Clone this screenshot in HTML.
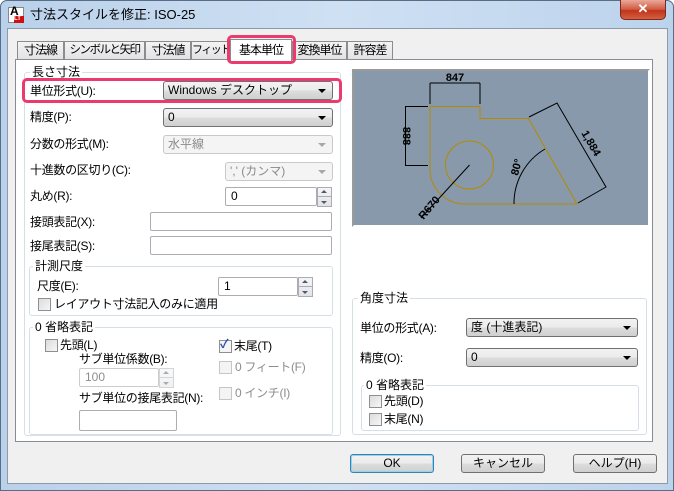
<!DOCTYPE html>
<html><head><meta charset="utf-8"><style>
*{box-sizing:border-box;margin:0;padding:0}
body{width:674px;height:491px;overflow:hidden;background:#fff;font-family:"Liberation Sans","Noto Sans CJK JP",sans-serif;font-size:12px;color:#000;position:relative}
.a{position:absolute}
.frame{left:0;top:0;width:674px;height:491px;border-radius:7px 7px 0 0;background:linear-gradient(90deg,#b9d1ea 0%,#cfe0f3 50%,#bcd3ec 100%);border:1px solid #5a6d84}
.client{left:7px;top:28px;width:661px;height:456px;background:#f0f0f0;border:1px solid #8e9aa8}
.lbl{position:absolute;white-space:nowrap;line-height:14px;letter-spacing:-0.3px}
.tab{position:absolute;top:41px;height:19px;border:1px solid #8c8c8c;border-bottom:none;background:linear-gradient(#f4f4f4,#e2e2e2);text-align:center;line-height:17px;font-size:12px;white-space:nowrap;letter-spacing:-1px;overflow:visible}
.panel{left:15px;top:59px;width:638px;height:383px;background:#fff;border:1px solid #898c95}
.grp{position:absolute;border:1px solid #d5dfe5;border-radius:3px}
.leg{position:absolute;background:#fff;padding:0 2px;line-height:14px;white-space:nowrap}
.cb{position:absolute;height:19px;border:1px solid #707070;border-radius:3px;background:linear-gradient(#f2f2f2,#ebebeb 50%,#dddddd 50%,#cfcfcf);line-height:17px;padding-left:4px}
.cb:after{content:"";position:absolute;right:6px;top:7px;border-left:4px solid transparent;border-right:4px solid transparent;border-top:4px solid #000}
.cbd{position:absolute;height:19px;border:1px solid #c9c9c9;border-radius:3px;background:#f4f4f4;color:#8a8a8a;line-height:17px;padding-left:4px}
.cbd:after{content:"";position:absolute;right:6px;top:7px;border-left:4px solid transparent;border-right:4px solid transparent;border-top:4px solid #a8a8a8}
.tb{position:absolute;height:19px;border:1px solid #abadb3;background:#fff;line-height:17px;padding-left:5px;border-radius:2px}
.spin{position:absolute;width:15px;border:1px solid #aab;background:linear-gradient(#f6f6f6,#e4e4e4)}
.spin:before{content:"";position:absolute;left:3px;top:2px;border-left:3.5px solid transparent;border-right:3.5px solid transparent;border-bottom:3.5px solid #4a5a78}
.spin:after{content:"";position:absolute;left:3px;bottom:2px;border-left:3.5px solid transparent;border-right:3.5px solid transparent;border-top:3.5px solid #4a5a78}
.spin i{position:absolute;left:0;right:0;top:8px;border-top:1px solid #aab}
.chk{position:absolute;width:13px;height:13px;border:1px solid #8f8f8f;background:linear-gradient(135deg,#dcdcdc,#f6f6f6)}
.btn{position:absolute;top:454px;height:19px;width:84px;border:1px solid #707070;border-radius:3px;background:linear-gradient(#f2f2f2,#ebebeb 50%,#dddddd 50%,#cfcfcf);text-align:center;line-height:17px}
.dis{color:#8d8d8d}
</style></head><body>
<div class="a frame"></div>
<div class="a" style="left:8px;top:7px;width:16px;height:16px;background:#fff;border:1px solid #888"></div>
<div class="a" style="left:10px;top:5px;font-size:12px;font-weight:bold;line-height:12px">A</div>
<div class="a" style="left:14px;top:16px;width:10px;height:7px;background:#d01010;color:#fff;font-size:6px;line-height:7px;font-weight:bold">LT</div>
<div class="lbl" style="left:30px;top:7px;font-size:13px;line-height:16px;letter-spacing:0">寸法スタイルを修正: ISO-25</div>
<div class="a" style="left:620px;top:0;width:46px;height:20px;border:1px solid #7a2a20;border-top:none;border-radius:0 0 5px 5px;background:linear-gradient(#e9a99a,#d0593f 50%,#c0331b 55%,#d55f3f);color:#fff;text-align:center;font-weight:bold;font-size:13px;line-height:18px">✕</div>
<div class="a client"></div>
<div class="tab" style="left:17px;width:47px">寸法線</div>
<div class="tab" style="left:64px;width:81px;font-size:11.5px;letter-spacing:-1.5px">シンボルと矢印</div>
<div class="tab" style="left:145px;width:46px">寸法値</div>
<div class="tab" style="left:191px;width:39px;font-size:11px;letter-spacing:-1.5px">フィット</div>
<div class="tab" style="left:292px;width:55px">変換単位</div>
<div class="tab" style="left:347px;width:46px">許容差</div>
<div class="a panel"></div>
<div class="tab" style="left:230px;top:39px;width:62px;height:22px;background:#fff;border-bottom:none;z-index:2;line-height:20px">基本単位</div>
<div class="a" style="left:227px;top:35px;width:69px;height:29px;border:3px solid #ea3a6e;border-radius:5px;z-index:3"></div>

<div class="grp" style="left:24px;top:72px;width:317px;height:364px"></div>
<div class="leg" style="left:30px;top:65px">長さ寸法</div>
<div class="a" style="left:22px;top:78px;width:320px;height:25px;border:3px solid #ea3a6e;border-radius:5px;z-index:3"></div>
<div class="lbl" style="left:30px;top:84px">単位形式(U):</div>
<div class="cb" style="left:163px;top:81px;width:170px">Windows デスクトップ</div>
<div class="lbl" style="left:30px;top:110px">精度(P):</div>
<div class="cb" style="left:163px;top:108px;width:170px">0</div>
<div class="lbl" style="left:30px;top:137px">分数の形式(M):</div>
<div class="cbd" style="left:163px;top:135px;width:170px">水平線</div>
<div class="lbl" style="left:30px;top:163px">十進数の区切り(C):</div>
<div class="cbd" style="left:225px;top:162px;width:108px">',' (カンマ)</div>
<div class="lbl" style="left:30px;top:189px">丸め(R):</div>
<div class="tb" style="left:225px;top:187px;width:92px">0</div>
<div class="spin" style="left:317px;top:187px;height:20px"><i></i></div>
<div class="lbl" style="left:30px;top:215px">接頭表記(X):</div>
<div class="tb" style="left:150px;top:212px;width:182px"></div>
<div class="lbl" style="left:30px;top:239px">接尾表記(S):</div>
<div class="tb" style="left:150px;top:236px;width:182px"></div>

<div class="grp" style="left:29px;top:266px;width:304px;height:50px"></div>
<div class="leg" style="left:33px;top:259px">計測尺度</div>
<div class="lbl" style="left:37px;top:279px">尺度(E):</div>
<div class="tb" style="left:218px;top:277px;width:80px">1</div>
<div class="spin" style="left:298px;top:277px;height:20px"><i></i></div>
<div class="chk" style="left:38px;top:298px"></div>
<div class="lbl" style="left:54px;top:297px">レイアウト寸法記入のみに適用</div>

<div class="grp" style="left:29px;top:327px;width:304px;height:108px"></div>
<div class="leg" style="left:33px;top:320px">0 省略表記</div>
<div class="chk" style="left:45px;top:339px"></div>
<div class="lbl" style="left:60px;top:338px">先頭(L)</div>
<div class="lbl" style="left:79px;top:352px">サブ単位係数(B):</div>
<div class="tb" style="left:79px;top:368px;width:80px;border-color:#ccc;color:#8d8d8d">100</div>
<div class="spin" style="left:159px;top:368px;height:20px;opacity:.5"><i></i></div>
<div class="lbl" style="left:79px;top:391px">サブ単位の接尾表記(N):</div>
<div class="tb" style="left:79px;top:410px;width:98px;height:21px"></div>
<div class="chk" style="left:219px;top:340px;background:#f4f4f4"></div>
<div class="lbl" style="left:220px;top:337px;color:#2a4fb0;font-weight:bold">✓</div>
<div class="lbl" style="left:234px;top:339px">末尾(T)</div>
<div class="chk" style="left:219px;top:361px;border-color:#c6c6c6;background:#f4f4f4"></div>
<div class="lbl dis" style="left:235px;top:360px">0 フィート(F)</div>
<div class="chk" style="left:219px;top:387px;border-color:#c6c6c6;background:#f4f4f4"></div>
<div class="lbl dis" style="left:235px;top:386px">0 インチ(I)</div>

<div class="a" style="left:352px;top:69px;width:298px;height:158px;background:#8799ab;border:2px solid #9a9a9a;border-right-color:#fff;border-bottom-color:#fff"></div>
<svg class="a" style="left:0;top:0" width="674" height="491" viewBox="0 0 674 491">
<g fill="none" stroke="#b58a00" stroke-width="1">
<path d="M430,106.5 H480 V118.5 H528.5 L577,204 H465 A35,35 0 0 1 430,170 Z"/>
<circle cx="469.5" cy="165" r="24"/>
</g>
<g fill="none" stroke="#000" stroke-width="1">
<path d="M430,104 V83 M480,104 V83 M430,83 H480"/>
<path d="M428,106.5 H405.5 V165.5 H428"/>
<path d="M529,117 L557,103 L606,187 L578,203"/>
<path d="M514,204 A63,63 0 0 1 545,149"/>
<path d="M469.5,165 L421,218"/>
</g>
<g font-family="Liberation Sans,sans-serif" font-weight="bold" font-size="11" fill="#000">
<text x="455" y="81" text-anchor="middle">847</text>
<text transform="translate(403,136) rotate(90)" text-anchor="middle">888</text>
<text transform="translate(588,145) rotate(60)" text-anchor="middle">1,884</text>
<text transform="translate(520,168) rotate(-75)" text-anchor="middle">80°</text>
<text transform="translate(432,210) rotate(-50)" text-anchor="middle">R670</text>
</g>
</svg>

<div class="grp" style="left:352px;top:298px;width:295px;height:137px"></div>
<div class="leg" style="left:358px;top:291px">角度寸法</div>
<div class="lbl" style="left:360px;top:321px">単位の形式(A):</div>
<div class="cb" style="left:466px;top:318px;width:172px">度 (十進表記)</div>
<div class="lbl" style="left:360px;top:351px">精度(O):</div>
<div class="cb" style="left:466px;top:348px;width:172px">0</div>
<div class="grp" style="left:361px;top:385px;width:278px;height:46px"></div>
<div class="leg" style="left:364px;top:378px">0 省略表記</div>
<div class="chk" style="left:369px;top:395px"></div>
<div class="lbl" style="left:384px;top:394px">先頭(D)</div>
<div class="chk" style="left:369px;top:413px"></div>
<div class="lbl" style="left:384px;top:412px">末尾(N)</div>

<div class="btn" style="left:350px;border-color:#3c7fb1;box-shadow:inset 0 0 0 1px #8fd3f5">OK</div>
<div class="btn" style="left:461px">キャンセル</div>
<div class="btn" style="left:573px">ヘルプ(H)</div>
</body></html>
